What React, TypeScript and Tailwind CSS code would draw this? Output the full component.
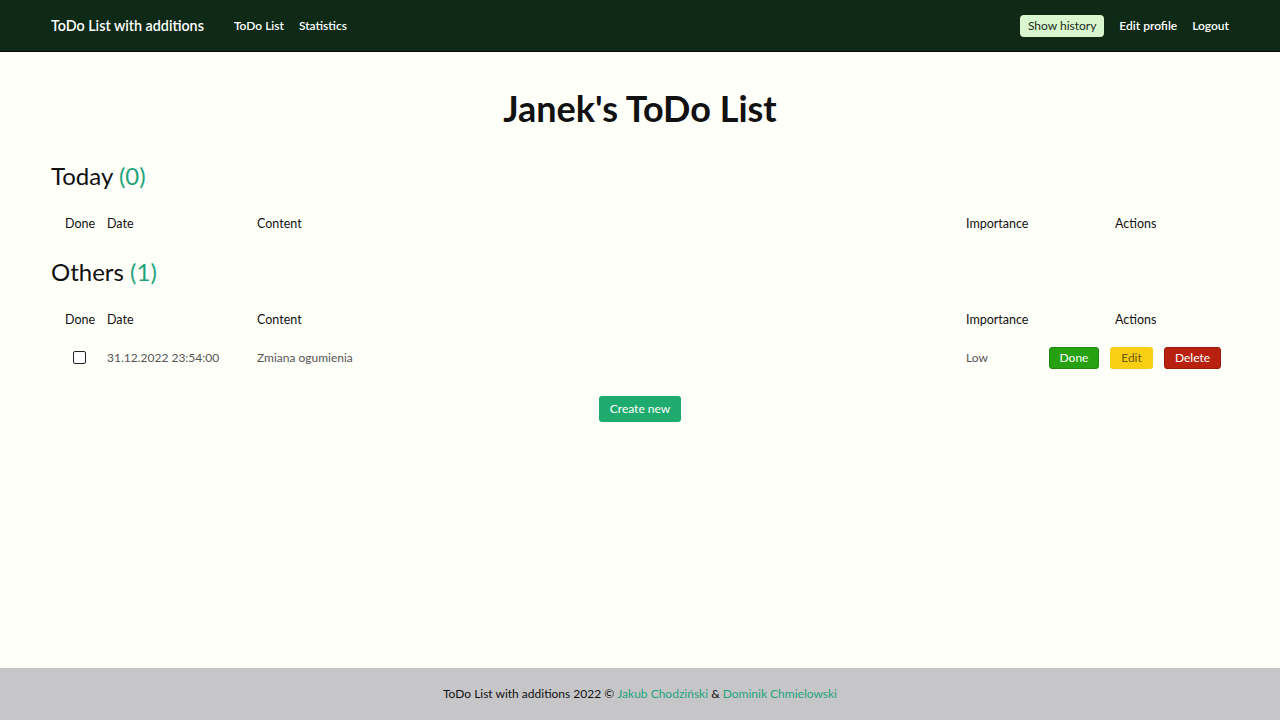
import React from "react";

const font = { fontFamily: "Lato, 'Noto Sans', sans-serif" };

function Header() {
  return (
    <div className="grid grid-cols-[42px_150px_1fr_149px_100px] items-center text-[12.5px] text-[#111] pl-[14px] pr-[14px] h-[24px]">
      <div>Done</div>
      <div>Date</div>
      <div>Content</div>
      <div>Importance</div>
      <div>Actions</div>
    </div>
  );
}

export default function App() {
  return (
    <div className="min-h-[720px] flex flex-col bg-[#fffffa]" style={font}>
      <nav className="h-[52px] bg-[#0e2a16] border-b border-[#050a05] flex items-center px-[51px] text-white pt-[1px]">
        <span className="text-[14.3px] font-semibold">ToDo List with additions</span>
        <span className="ml-[30px] text-[12px] font-semibold">ToDo List</span>
        <span className="ml-[15px] text-[12px] font-semibold">Statistics</span>
        <div className="ml-auto flex items-center">
          <span className="bg-[#d9f7cf] text-[#1a2a1a] text-[12px] px-[8px] h-[22px] flex items-center rounded-[4px]">Show history</span>
          <span className="ml-[15px] text-[12px] font-semibold">Edit profile</span>
          <span className="ml-[15px] text-[12px] font-semibold">Logout</span>
        </div>
      </nav>
      <main className="flex-1 px-[51px]">
        <h1 className="text-center text-[36px] font-bold text-[#111] mt-[32px] leading-[48px]">Janek's ToDo List</h1>
        <h2 className="text-[24px] text-[#111] mt-[28px] leading-[32px]">Today <span className="text-[#1fa37d]">(0)</span></h2>
        <div className="mt-[20px]"><Header /></div>
        <h2 className="text-[24px] text-[#111] mt-[20px] leading-[32px]">Others <span className="text-[#1fa37d]">(1)</span></h2>
        <div className="mt-[20px]"><Header /></div>
        <div className="grid grid-cols-[42px_150px_1fr_83px_auto] items-center text-[12px] text-[#555] pl-[14px] pr-[8px] h-[50px] pt-[1px]">
          <div className="pl-[8px]"><div className="w-[13px] h-[13px] border-[1.5px] border-[#222] rounded-[2px] bg-white" /></div>
          <div>31.12.2022 23:54:00</div>
          <div>Zmiana ogumienia</div>
          <div>Low</div>
          <div className="flex gap-[11px]">
            <span className="bg-[#26a112] text-white w-[50px] justify-center h-[22px] flex items-center rounded-[3px] border border-[#1c8a0c]">Done</span>
            <span className="bg-[#f8cf12] text-[#6b5a10] w-[43px] justify-center h-[22px] flex items-center rounded-[3px]">Edit</span>
            <span className="bg-[#b8200f] text-white w-[57px] justify-center h-[22px] flex items-center rounded-[3px] border border-[#9a1a0c]">Delete</span>
          </div>
        </div>
        <div className="flex justify-center mt-[14px]">
          <span className="bg-[#1fab6e] text-white text-[12px] w-[82px] justify-center h-[26px] flex items-center rounded-[3px]">Create new</span>
        </div>
      </main>
      <footer className="h-[52px] bg-[#c6c6c8] flex items-center justify-center text-[12px] text-[#111]">
        ToDo List with additions 2022 ©&nbsp;<span className="text-[#1fa37d]">Jakub Chodziński</span>&nbsp;&amp;&nbsp;<span className="text-[#1fa37d]">Dominik Chmielowski</span>
      </footer>
    </div>
  );
}
